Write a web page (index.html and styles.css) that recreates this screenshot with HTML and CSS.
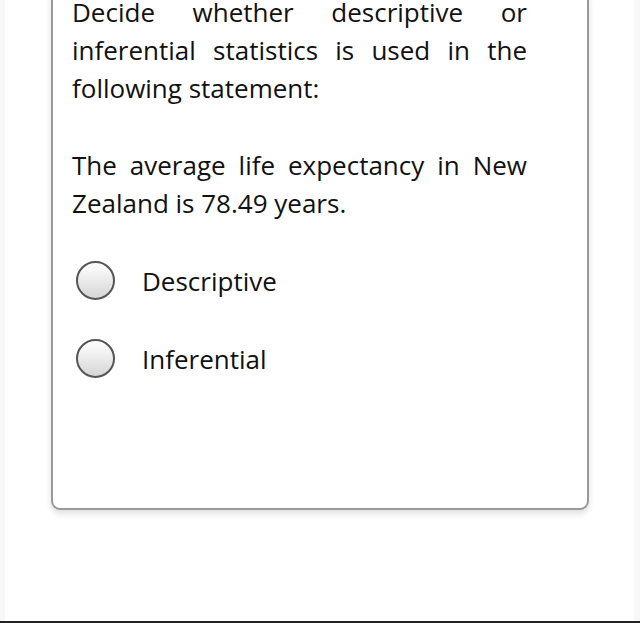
FILE: index.html
```html
<!DOCTYPE html>
<html lang="en">
<head>
    <meta charset="UTF-8">
    <meta name="viewport" content="width=device-width, initial-scale=1.0">
    <title>Question</title>
    <link rel="stylesheet" href="styles.css">
</head>
<body>
    <div class="page">
        <div class="card">
            <p class="question">Decide whether descriptive or inferential statistics is used in the following statement:</p>
            <p class="question">The average life expectancy in New Zealand is 78.49 years.</p>
            <div class="options">
                <label class="option"><span class="radio"></span> Descriptive</label>
                <label class="option"><span class="radio"></span> Inferential</label>
            </div>
        </div>
    </div>
</body>
</html>
```

FILE: styles.css
```css
html, body {
    margin: 0;
    height: 100%;
}
body {
    font-family: "Open Sans", Arial, sans-serif;
    background-color: #ffffff;
    color: #111;
    border-bottom: 2px solid #222;
    box-sizing: border-box;
}
.page {
    height: 100%;
    border-left: 5px solid #f8f8f8;
    border-right: 6px solid #f8f8f8;
    padding-left: 46px;
    padding-right: 45px;
    box-sizing: border-box;
    overflow: hidden;
}
.card {
    margin-top: -7px;
    width: 538px;
    height: 517px;
    box-sizing: border-box;
    border: 2px solid #999;
    border-top: none;
    border-radius: 0 0 9px 9px;
    box-shadow: 0 4px 6px rgba(0, 0, 0, 0.12);
    padding: 0 60px 0 19px;
}
.question {
    margin: 0 0 39px 0;
    font-size: 26px;
    line-height: 38px;
    text-align: justify;
}
.options {
    display: flex;
    flex-direction: column;
    gap: 39px;
}
.option {
    display: flex;
    align-items: center;
    gap: 27px;
    font-size: 26px;
    padding-left: 4px;
}
.radio {
    width: 39px;
    height: 39px;
    box-sizing: border-box;
    border: 2px solid #555;
    border-radius: 50%;
    background: linear-gradient(#ffffff, #d6d6d6);
}
```
